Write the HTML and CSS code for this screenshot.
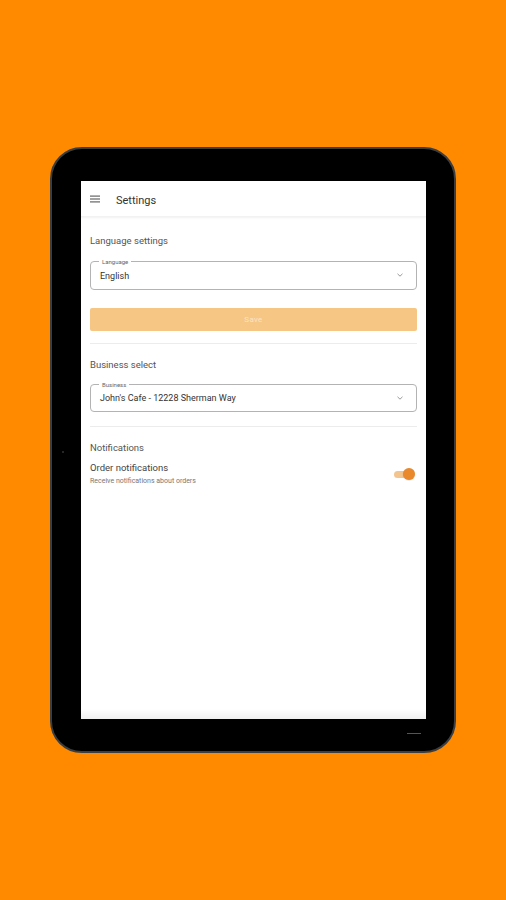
FILE: index.html
```html
<!DOCTYPE html>
<html>
<head>
<meta charset="utf-8">
<link rel="stylesheet" href="styles.css">
</head>
<body>
<div class="stage">
  <div class="tablet">
    <span class="camera"></span>
    <span class="homebar"></span>
    <div class="screen">
      <header class="appbar">
        <svg class="menu" width="10" height="8" viewBox="0 0 10 8"><rect x="0" y="0.5" width="10" height="1.2" fill="#666"/><rect x="0" y="3.4" width="10" height="1.2" fill="#666"/><rect x="0" y="6.3" width="10" height="1.2" fill="#666"/></svg>
        <span class="title">Settings</span>
      </header>
      <main class="content">
        <section class="section first">
          <div class="section-title">Language settings</div>
          <div class="select">
            <span class="select-label">Language</span>
            <span class="select-value">English</span>
            <svg class="caret" width="6" height="4" viewBox="0 0 6 4"><path d="M0.5 0.8 L3 3.2 L5.5 0.8" fill="none" stroke="#999" stroke-width="1"/></svg>
          </div>
          <button class="save">Save</button>
        </section>
        <section class="section">
          <div class="section-title">Business select</div>
          <div class="select">
            <span class="select-label">Business</span>
            <span class="select-value">John's Cafe - 12228 Sherman Way</span>
            <svg class="caret" width="6" height="4" viewBox="0 0 6 4"><path d="M0.5 0.8 L3 3.2 L5.5 0.8" fill="none" stroke="#999" stroke-width="1"/></svg>
          </div>
        </section>
        <section class="section last">
          <div class="section-title">Notifications</div>
          <div class="toggle-row">
            <div class="toggle-text">
              <div class="toggle-title">Order notifications</div>
              <div class="toggle-sub">Receive notifications about orders</div>
            </div>
            <div class="switch"><span class="track"></span><span class="thumb"></span></div>
          </div>
        </section>
      </main>
      <div class="bottom-fade"></div>
    </div>
  </div>
</div>
</body>
</html>
```
FILE: styles.css
```css
* { box-sizing: border-box; }
html, body { margin: 0; padding: 0; }
body {
  background: #ff8a00;
  font-family: Roboto, "Liberation Sans", Arial, sans-serif;
  width: 506px;
  height: 900px;
  overflow: hidden;
}
.stage {
  width: 506px;
  height: 900px;
  display: flex;
  align-items: center;
  justify-content: center;
}
.tablet {
  position: relative;
  width: 406px;
  height: 606px;
  margin-top: -1px;
  background: #000;
  border: 2px solid #3a3e42;
  border-radius: 32px;
  padding: 32px 28px 32px 29px;
  display: flex;
}
.camera {
  position: absolute;
  left: 10px;
  top: 302px;
  width: 2px;
  height: 2px;
  border-radius: 50%;
  background: #333;
}
.homebar {
  position: absolute;
  right: 33px;
  bottom: 17px;
  width: 14px;
  height: 1px;
  background: #555;
}
.screen {
  position: relative;
  flex: 1;
  background: #fff;
  display: flex;
  flex-direction: column;
  overflow: hidden;
}
.appbar {
  height: 36px;
  flex: none;
  display: flex;
  align-items: center;
  padding-left: 9px;
  box-shadow: 0 1px 2px rgba(0,0,0,0.06);
  border-bottom: 1px solid #f2f2f2;
}
.menu { display: block; margin-top: 2px; }
.title {
  margin-left: 16px;
  font-size: 11px;
  color: #333;
  margin-top: 4px;
}
.content {
  padding: 0 9px;
}
.section {
  padding: 18px 0 12px;
  border-bottom: 1px solid #ececec;
}
.section + .section { padding-top: 15px; padding-bottom: 14px; }
.section.last { border-bottom: none; padding-top: 15px; }
.section-title {
  font-size: 9.5px;
  line-height: 12px;
  color: #555;
}
.select {
  position: relative;
  margin-top: 14px;
  height: 29px;
  border: 1px solid #b3b3b3;
  border-radius: 4px;
  display: flex;
  align-items: center;
  padding: 0 9px;
}
.section + .section .select { height: 28px; margin-top: 13px; }
.select-label {
  position: absolute;
  left: 8px;
  top: -4px;
  padding: 0 3px;
  background: #fff;
  font-size: 6px;
  line-height: 7px;
  color: #666;
}
.select-value {
  flex: 1;
  font-size: 9px;
  color: #333;
  margin-top: 1px;
}
.caret { display: block; margin-right: 4px; }
.save {
  display: block;
  width: 100%;
  margin-top: 18px;
  height: 23px;
  border: none;
  border-radius: 2px;
  background: #f6c684;
  color: #fbe3c3;
  font-family: inherit;
  font-size: 8px;
  letter-spacing: 0.3px;
  padding: 0;
}
.toggle-row {
  display: flex;
  align-items: center;
  margin-top: 8px;
}
.toggle-text { flex: 1; }
.toggle-title {
  font-size: 9.5px;
  line-height: 12px;
  color: #444;
}
.toggle-sub {
  font-size: 7px;
  line-height: 10px;
  margin-top: 2px;
  color: #777;
}
.switch {
  position: relative;
  width: 22px;
  height: 12px;
  margin-right: 2px;
}
.track {
  position: absolute;
  left: 1px;
  top: 3px;
  width: 18px;
  height: 7px;
  border-radius: 4px;
  background: #f4c48e;
}
.thumb {
  position: absolute;
  right: 0;
  top: 0;
  width: 12px;
  height: 12px;
  border-radius: 50%;
  background: #e9892b;
  box-shadow: 0 0.5px 1px rgba(0,0,0,0.2);
}
.bottom-fade {
  position: absolute;
  left: 0;
  right: 0;
  bottom: 0;
  height: 10px;
  background: linear-gradient(to bottom, rgba(0,0,0,0), rgba(0,0,0,0.06));
}
```
